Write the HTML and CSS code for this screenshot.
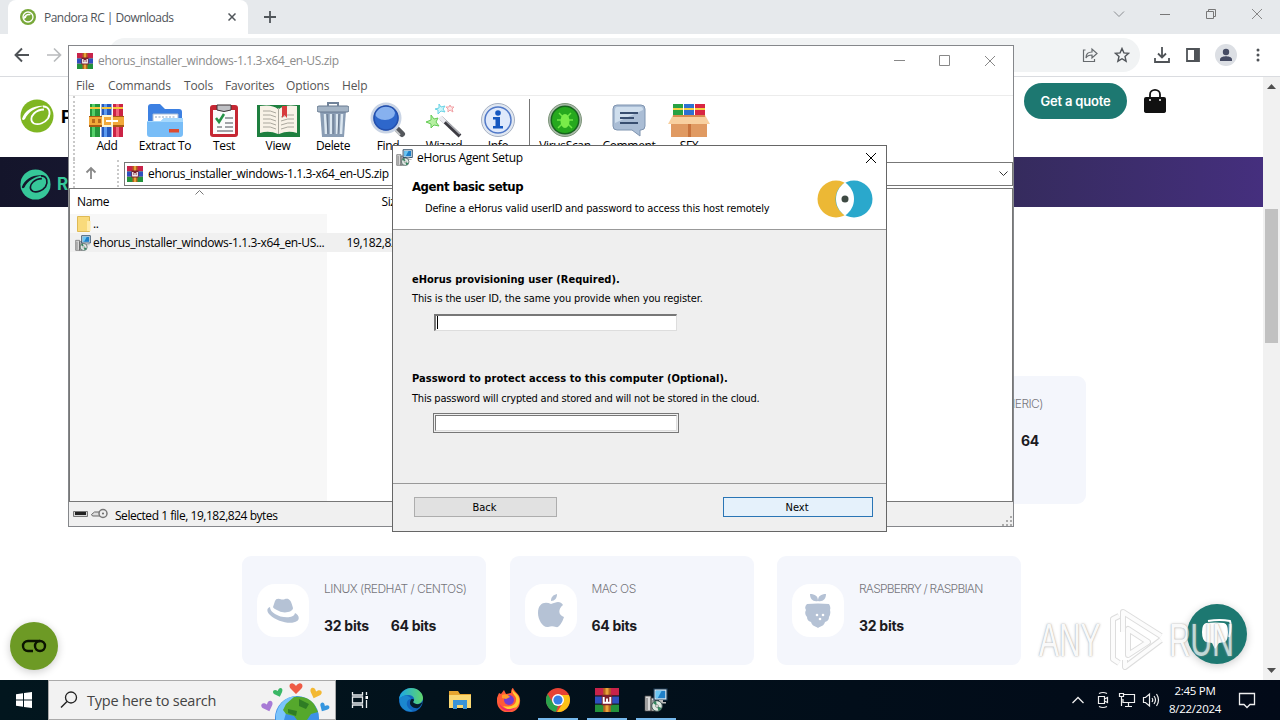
FILE: index.html
```html
<!DOCTYPE html>
<html lang="en">
<head>
    <meta charset="UTF-8">
    <meta name="viewport" content="width=device-width, initial-scale=1.0">
    <title>Pandora RC | Downloads</title>
    <link rel="stylesheet" href="styles.css">
</head>
<body>
    <!-- shared icons -->
    <svg class="defs" width="0" height="0">
        <symbol id="rar" viewBox="0 0 16 16">
            <path fill="#c8234a" d="M0 0h16v5H0z"/><path fill="#2f4fc0" d="M0 5.5h16v5H0z"/><path fill="#23923c" d="M0 11h16v5H0z"/>
            <path fill="#222" opacity=".5" d="M0 5h16v.8H0zM0 10.3h16v.8H0z"/>
            <path fill="#b5651d" d="M5.5 0h5v16h-5z"/><path fill="#e8a33a" d="M7 0h2v16H7z"/>
            <path fill="#7a1f2b" d="M4.5 4.5h7v7h-7z"/><path fill="none" stroke="#fff" stroke-width="1.3" d="M5.8 6v3.8h4.4V6M8 7v2.5"/>
        </symbol>
        <symbol id="msi" viewBox="0 0 24 24">
            <path fill="#d8d8d8" stroke="#444" stroke-width=".8" d="M1 8h6v15H1zM7 10h4v13H7z"/><path stroke="#666" d="M3 10v12M9 12v10"/>
            <path fill="#dfe8ee" stroke="#1d3c58" stroke-width="1.2" d="M10 1h13v11H10z"/><path fill="#1e7fc8" d="M11.700 2.700h9.600v7.600h-9.600z"/><path fill="#6cc6f2" d="M11.700 2.700h6l-4 7.600h-2z"/>
            <path fill="#bbb" d="M15 12h4v2h3v1.500H12V14h3z"/>
            <circle cx="13" cy="18" r="5.300" fill="#dfe9e2" stroke="#3c5052" stroke-width="1"/><path fill="#35855f" d="M13 18l-4-3a5 5 0 0 1 3-2zM13 18l4.500 2a5 5 0 0 1-3 3z"/><circle cx="13" cy="18" r="1.400" fill="#fff" stroke="#555" stroke-width=".6"/>
        </symbol>
        <symbol id="pandora" viewBox="0 0 34 34">
            <circle cx="17" cy="17" r="16.500" fill="currentColor" stroke="none"/>
            <path stroke="none" d="M2 20C5 11 14 6 25 7c-9 1-17 6-20 13q-2 2-3 0z"/>
            <path fill="none" stroke-width="1.800" d="M23 7.500c7 0 8 7 5 12-3 4-9 7-14 5-4-2-3-7 0-10 3-3 6-4 10-4"/>
        </symbol>
        <symbol id="chrome-x" viewBox="0 0 12 12"><path fill="none" stroke="currentColor" d="M1 1l10 10M11 1L1 11"/></symbol>
    </svg>

    <div class="desktop">
        <div class="browser">
            <div class="tabstrip">
                <div class="tab">
                    <svg class="favicon" width="16" height="16" viewBox="0 0 16 16"><circle cx="8" cy="8" r="8" fill="#78a83a"/><circle cx="8" cy="8" r="5" fill="none" stroke="#fff" stroke-width="1.300"/><path fill="#fff" d="M3 9c2-4 5-5 8-4L9 7l-5 3z"/><circle cx="8.500" cy="8.600" r="2.300" fill="#78a83a"/></svg>
                    <span class="tab-title">Pandora RC | Downloads</span>
                    <svg width="8" height="8" viewBox="0 0 8 8"><path stroke="#50555a" stroke-width="1.500" d="M.5.5l7 7M7.500.5l-7 7"/></svg>
                </div>
                <svg class="new-tab" width="12" height="12" viewBox="0 0 12 12"><path stroke="#50555a" stroke-width="1.800" d="M6 0v12M0 6h12"/></svg>
                <div class="window-buttons">
                    <svg width="12" height="12" viewBox="0 0 12 12"><path fill="none" stroke="#8a8d91" d="M1 3.500l5 5 5-5"/></svg>
                    <svg width="12" height="12" viewBox="0 0 12 12"><path stroke="#777" d="M1 6.500h10"/></svg>
                    <svg width="12" height="12" viewBox="0 0 12 12"><path fill="none" stroke="#777" d="M1.500 3.500h7v7h-7zM3.500 3V1.500h7v7H9"/></svg>
                    <svg class="grey" width="12" height="12"><use href="#chrome-x"/></svg>
                </div>
            </div>
            <div class="toolbar">
                <svg class="nav" width="16" height="16" viewBox="0 0 16 16"><path fill="none" stroke="#4f5357" stroke-width="1.900" d="M15 8H2M8 1.500L1.500 8 8 14.500"/></svg>
                <svg class="nav" width="16" height="16" viewBox="0 0 16 16"><path fill="none" stroke="#b9bbbd" stroke-width="1.700" d="M1 8h13M8 1.500L14.500 8 8 14.500"/></svg>
                <div class="omnibox">
                    <svg width="16" height="16" viewBox="0 0 16 16"><path fill="none" stroke="#666a6e" stroke-width="1.200" d="M3.500 3H1.500v11.500h11V12M4 11c0-4 2-6 6-6V2l5 4.500L10 11V8c-3 0-5 1-6 3z"/></svg>
                    <svg width="16" height="16" viewBox="0 0 16 16"><path fill="none" stroke="#505459" stroke-width="1.400" d="M8 1.500l1.900 4.400 4.700.4-3.600 3.200 1.100 4.700L8 11.700l-4.100 2.500L5 9.500 1.400 6.300l4.700-.4z"/></svg>
                </div>
                <div class="tools">
                    <svg width="18" height="18" viewBox="0 0 18 18"><path fill="none" stroke="#4f5357" stroke-width="1.800" d="M9 1v10M5 7.500l4 4 4-4M2 12v4h14v-4"/></svg>
                    <svg width="18" height="18" viewBox="0 0 18 18"><path fill="none" stroke="#4f5357" stroke-width="1.800" d="M3 3h12v12H3z"/><path fill="#4f5357" d="M10 3h5v12h-5z"/></svg>
                    <svg width="22" height="22" viewBox="0 0 22 22"><circle cx="11" cy="11" r="11" fill="#dcdfe4"/><circle cx="11" cy="8" r="3.200" fill="#454b63"/><path fill="#454b63" d="M5 17v-1.500C5 13 9 12.300 11 12.300s6 .7 6 3.200V17z"/></svg>
                    <svg class="dots" width="4" height="16" viewBox="0 0 4 16"><g fill="#4f5357"><circle cx="2" cy="3" r="1.500"/><circle cx="2" cy="8" r="1.500"/><circle cx="2" cy="13" r="1.500"/></g></svg>
                </div>
            </div>

            <div class="viewport">
                <div class="page">
                    <div class="site-header">
                        <svg class="logo green" width="34" height="34"><use href="#pandora"/></svg>
                        <b class="brand">Pandora</b>
                        <button class="quote-btn">Get a quote</button>
                        <svg width="22" height="25" viewBox="0 0 22 25"><path fill="none" stroke="#111" stroke-width="1.800" d="M6 11V5.500a5 4.600 0 0 1 10 0V11"/><path fill="#111" d="M2 8h18q2 0 2 2v12q0 2-3 2H3q-3 0-3-2V10q0-2 2-2z"/><circle cx="6" cy="11" r="1" fill="#fff"/><circle cx="16" cy="11" r="1" fill="#fff"/></svg>
                    </div>
                    <div class="banner">
                        <svg class="logo teal" width="31" height="31"><use href="#pandora"/></svg>
                        <b>RC</b>
                    </div>
                    <div class="cards first-row">
                        <div class="card">
                            <div>
                                <div class="os">LINUX (GENERIC)</div>
                                <div class="bits"><b>32</b><b>64</b></div>
                            </div>
                        </div>
                    </div>
                    <div class="cards">
                        <div class="card">
                            <div class="os-icon"><svg width="32" height="26" viewBox="0 0 32 26"><path fill="#b5c2d5" d="M8 3q1-3 5-2 3 1 5 0c4-1 6 1 8 9 0 4-9 6-14 3-4-2-6-3-6-4z"/><path fill="#b5c2d5" d="M3 9c-3 1-4 4 0 8 7 7 22 10 27 6 3-2 2-6-2-8-1 6-14 5-20 1-3-2-5-4-5-7z"/></svg></div>
                            <div>
                                <div class="os">LINUX (REDHAT / CENTOS)</div>
                                <div class="bits"><b>32 bits</b><b>64 bits</b></div>
                            </div>
                        </div>
                        <div class="card">
                            <div class="os-icon"><svg width="26" height="34" viewBox="0 0 26 34"><path fill="#b5c2d5" d="M13 7c0-4 2-6 6-7 0 4-2 7-6 7zM13 10c3-1 5-2 7-2 2 0 4 1 5 3-5 4-5 10 1 12-2 6-5 11-8 10-3-1-5-1-8 0C5 34 0 26 0 19 0 9 7 7 13 10z"/></svg></div>
                            <div>
                                <div class="os">MAC OS</div>
                                <div class="bits"><b>64 bits</b></div>
                            </div>
                        </div>
                        <div class="card">
                            <div class="os-icon"><svg width="26" height="34" viewBox="0 0 26 34"><path fill="#b5c2d5" d="M5 0c5 0 8 2 8 7-5 1-8-2-8-7zM21 0c-5 0-8 2-8 7 5 1 8-2 8-7zM2 10q11-1 22 0 2 3 1 6 1 4-1 7 0 4-4 5c-1 4-4 4-7 6-3-2-6-2-7-6q-4-1-4-5-3-3-1-7-2-3 1-6z"/><g fill="#fff"><circle cx="12" cy="21" r="1.300"/><circle cx="18" cy="21" r="1.300"/><circle cx="15" cy="25" r="1.300"/></g></svg></div>
                            <div>
                                <div class="os rasp">RASPBERRY / RASPBIAN</div>
                                <div class="bits"><b>32 bits</b></div>
                            </div>
                        </div>
                    </div>
                </div>
                <div class="scrollbar">
                    <svg width="9" height="5" viewBox="0 0 9 5"><path fill="#505050" d="M0 5l4.500-5L9 5z"/></svg>
                    <div class="thumb"></div>
                    <svg width="9" height="5" viewBox="0 0 9 5"><path fill="#505050" d="M0 0l4.500 5L9 0z"/></svg>
                </div>
            </div>
        </div>

        <div class="cookie-btn"><svg width="26" height="14" viewBox="0 0 26 14"><path fill="none" stroke="#0b1400" stroke-width="2.400" d="M19 2H7a5 5 0 0 0 0 10h5"/><circle cx="19" cy="7" r="5" fill="none" stroke="#0b1400" stroke-width="2.400"/></svg></div>
        <div class="chat-btn"><svg width="32" height="30" viewBox="0 0 32 30"><path fill="none" stroke="#fff" stroke-width="2" d="M7 2q12-2 22 0 2 6-1 16"/><path fill="#fff" d="M5 4q10-1 18 0 4 1 4 9 0 8-3 10l-6 1-4 6-3-6-6-1Q1 21 1 13q0-8 4-9z"/></svg></div>
        <div class="watermark">
            <span>ANY</span>
            <svg width="58" height="64" viewBox="0 0 58 64">
                <g fill="none" stroke="#d2d2d2" stroke-width="6" stroke-linejoin="round"><path d="M12 8L6 11v40l6 4M16 24V4l38 24M54 32L18 59V52M21 21v26l20-13z"/></g>
                <g fill="none" stroke="#fcfcfc" stroke-width="4" stroke-linejoin="round"><path d="M12 8L6 11v40l6 4M16 24V4l38 24M54 32L18 59V52M21 21v26l20-13z"/></g>
            </svg>
            <span>RUN</span>
        </div>

        <!-- WinRAR -->
        <div class="winrar">
            <div class="win-title">
                <svg width="16" height="16"><use href="#rar"/></svg>
                <span class="zip-name">ehorus_installer_windows-1.1.3-x64_en-US.zip</span>
                <div class="win-controls">
                    <svg width="11" height="11" viewBox="0 0 11 11"><path stroke="#888" d="M0 5.500h11"/></svg>
                    <svg width="11" height="11" viewBox="0 0 11 11"><path fill="none" stroke="#888" d="M.5.5h10v10H.5z"/></svg>
                    <svg class="grey" width="12" height="12"><use href="#chrome-x"/></svg>
                </div>
            </div>
            <div class="menu"><span class="m1">File</span><span class="m2">Commands</span><span class="m3">Tools</span><span class="m4">Favorites</span><span class="m5">Options</span><span>Help</span></div>
            <div class="rar-tools">
                <div class="rt w50">
                    <svg width="36" height="34" viewBox="0 0 36 34"><path fill="#24963c" d="M1 1h10v33H1z"/><path fill="#54d069" d="M3 1h3v33H3z"/><path fill="#2559bd" d="M12.500 1h10v33h-10z"/><path fill="#5b9af0" d="M15 1h3v33h-3z"/><path fill="#cb2345" d="M24 1h10v33H24z"/><path fill="#f0647c" d="M27 1h3v33h-3z"/><path fill="#f5c63b" d="M1 4h10v2H1zM12.500 4h10v2h-10zM24 4h10v2H24z"/><path fill="#a85a14" d="M0 13h35v11H0z"/><path fill="#f1a93a" d="M0 14h35v8H0z"/><path fill="#b9691a" d="M3 16h3v4H3zM9 16h3v4H9z"/><path fill="none" stroke="#fff5cf" stroke-width="2" d="M14 13h9v10h-9z"/><path stroke="#fff" stroke-width="2" d="M17 18h12"/></svg>
                    <span>Add</span>
                </div>
                <div class="rt w66">
                    <svg width="38" height="34" viewBox="0 0 38 34"><path fill="#3c80e2" d="M2 4q0-3 3-3h9l5 5h14q3 0 3 3v20H2z"/><path fill="#fff" stroke="#a7bcd6" d="M7 11h25v12H7z"/><path stroke="#8ca2be" stroke-dasharray="2 1.500" d="M9 14h21"/><path fill="#78bdf7" d="M1 18h14l3-3h19v16q0 3-3 3H4q-3 0-3-3z"/><path fill="#a5d8fd" d="M1 18h14l3-3h19v4H1z"/><path fill="#dc4a30" d="M23 26h10v3.500H23z"/></svg>
                    <span>Extract To</span>
                </div>
                <div class="rt w52">
                    <svg width="30" height="34" viewBox="0 0 30 34"><rect x="1" y="2" width="28" height="32" rx="3" fill="#c52733"/><path fill="#fbfbfb" d="M4 7h22v24H4z"/><path fill="#bfc0c4" stroke="#3e3436" d="M8 2h14v5q-7 3-14 0z"/><path stroke="#85888d" stroke-width="1.500" d="M16 15h8M16 20h8M8 24h5M16 24h8M8 28h16"/><path fill="none" stroke="#259246" stroke-width="2.500" d="M7 15l3 4 5-8"/></svg>
                    <span>Test</span>
                </div>
                <div class="rt w56">
                    <svg width="43" height="34" viewBox="0 0 43 34"><path fill="#1e7f3f" d="M0 2h43v32H0z"/><path fill="#f8f2e7" d="M3 3q12-2 18 3v25q-9-4-18-1zM40 3q-12-2-18 3v25q9-4 18-1z"/><path fill="none" stroke="#aaa79d" d="M6 8q8-1 13 2M6 12q8-1 13 2M6 16q8-1 13 2M6 20q8-1 13 2M6 24q8-1 13 2M24 14q7-3 13-2M24 18q7-3 13-2M24 22q7-3 13-2M24 26q7-3 13-2M21.500 5v26"/><path fill="#d73b3c" d="M25 3h5v12l-2.500-3L25 15z"/></svg>
                    <span>View</span>
                </div>
                <div class="rt w54">
                    <svg width="32" height="36" viewBox="0 0 32 36"><path fill="#8a9db4" d="M3 9h26l-2 26H5z"/><path stroke="#dce7f0" stroke-width="2.500" d="M8 12l1 20M14 12v20M20 12v20M25 12l-1 20"/><path stroke="#64748a" d="M10 12l1 20M16 12v20M22 12l-1 20"/><rect x="0" y="4" width="32" height="6" rx="2" fill="#a4b4c5" stroke="#687b91"/><path fill="none" stroke="#71839a" stroke-width="2" d="M11 4V1h10v3"/></svg>
                    <span>Delete</span>
                </div>
                <div class="rt w56">
                    <svg width="37" height="36" viewBox="0 0 37 36"><path stroke="#54575c" stroke-width="6" stroke-linecap="round" d="M25 25l7 7"/><path stroke="#c6c8ca" stroke-width="2" d="M24 27l6 6"/><circle cx="16" cy="16" r="14" fill="#2e67cb" stroke="#c9d4e5" stroke-width="3"/><ellipse cx="15" cy="11" rx="10" ry="7" fill="#87b1ef"/><circle cx="16" cy="16" r="12" fill="none" stroke="#2450ad" stroke-width="1.500"/></svg>
                    <span>Find</span>
                </div>
                <div class="rt w56">
                    <svg width="36" height="34" viewBox="0 0 36 34"><path stroke="#3c3b42" stroke-width="4" d="M15 15l19 18"/><path stroke="#aeb0b6" stroke-width="1.500" d="M16 14l18 17"/><path stroke="#ececf1" stroke-width="4" d="M14 14l5 5"/><path fill="#b6f0a2" stroke="#65ca55" d="M5 12l3 4 4-1-2 4 3 4-5-1-3 3v-4l-5-2 5-2z"/><path fill="#cdf6fa" stroke="#6bd3e5" d="M13 1l2 3 4-1-2 3 2 3-4-1-3 3v-4L9 6l4-1z"/><path fill="#ffe9e9" stroke="#f1a2a6" d="M24 2l1 2 3 0-2 2 1 3-3-2-2 2 0-3-2-2 3 0z"/></svg>
                    <span>Wizard</span>
                </div>
                <div class="rt w52">
                    <svg width="36" height="34" viewBox="0 0 36 34"><circle cx="18" cy="17" r="16.500" fill="#e1e8f2" stroke="#a7b1c2"/><circle cx="18" cy="17" r="13" fill="#dfe9fb" stroke="#5179c8" stroke-width="1.500"/><circle cx="18" cy="10" r="2.800" fill="#1557c0"/><path fill="#1557c0" d="M13 14h7v9h3v2.500H13V23h2.500v-6.500H13z"/></svg>
                    <span>Info</span>
                </div>
                <div class="rt-sep"></div>
                <div class="rt w62">
                    <svg width="36" height="34" viewBox="0 0 36 34"><circle cx="18" cy="17" r="16.500" fill="#aab9aa" stroke="#7e977b"/><circle cx="18" cy="17" r="14.500" fill="#17631e"/><circle cx="18" cy="17" r="13" fill="#26a91e"/><path fill="none" stroke="#71e748" stroke-width="1.500" d="M12 10l4 4M24 10l-4 4M10 17h16M11 25l5-5M25 25l-5-5"/><ellipse cx="18" cy="18" rx="4.500" ry="7" fill="#79ec49"/></svg>
                    <span>VirusScan</span>
                </div>
                <div class="rt w66">
                    <svg width="34" height="34" viewBox="0 0 34 34"><path fill="#aabdd5" stroke="#7f94b0" d="M5 2h24q4 0 4 4v17q0 4-4 4h-1v6l-8-6H5q-4 0-4-4V6q0-4 4-4z"/><path fill="#cfdeed" d="M5 4h24q2 0 2 3l-28 13V7q0-3 2-3z"/><path stroke="#384e70" stroke-width="2" d="M8 10h18M8 15h14M8 20h18"/></svg>
                    <span>Comment</span>
                </div>
                <div class="rt w54">
                    <svg width="42" height="34" viewBox="0 0 42 34"><path fill="#28a243" d="M5 1h10v17H5z"/><path fill="#2d71d2" d="M16 1h10v17H16z"/><path fill="#d82643" d="M27 1h10v17H27z"/><path fill="#f5d145" d="M5 5h10v2H5zM16 5h10v2H16zM27 5h10v2H27z"/><path fill="#e09a62" d="M3 20h36v14H3z"/><path fill="#f8d0a0" d="M5 12h32l5 9H0z"/><path fill="#d98b50" d="M5 12h32v2H5z"/><path fill="#c8733d" d="M20 21h3v13h-3z"/></svg>
                    <span>SFX</span>
                </div>
            </div>
            <div class="address">
                <svg class="up" width="12" height="13" viewBox="0 0 12 13"><path fill="none" stroke="#888" stroke-width="1.800" d="M6 13V2M1.500 6.500L6 2l4.500 4.500"/></svg>
                <div class="grab"></div>
                <div class="path-box">
                    <svg width="16" height="16"><use href="#rar"/></svg>
                    <span class="zip-name">ehorus_installer_windows-1.1.3-x64_en-US.zip</span>
                    <svg class="drop" width="9" height="6" viewBox="0 0 9 6"><path fill="none" stroke="#333" d="M.5.5l4 4 4-4"/></svg>
                </div>
            </div>
            <div class="file-list">
                <div class="list-head"><span>Name</span><svg width="9" height="5" viewBox="0 0 9 5"><path fill="none" stroke="#777" d="M.5 4.500l4-4 4 4"/></svg><span class="size">Size</span></div>
                <div class="file-row">
                    <svg width="14" height="16" viewBox="0 0 14 16"><path fill="#f9da7b" stroke="#dfba55" d="M.5.5h12v15H.5z"/><path fill="#ffebaa" d="M10 5h3.500v10H10z"/></svg>
                    <span>..</span>
                </div>
                <div class="file-row selected">
                    <svg width="16" height="16"><use href="#msi"/></svg>
                    <span>ehorus_installer_windows-1.1.3-x64_en-US...</span>
                    <span class="size">19,182,824</span>
                </div>
                <div class="column-fill"></div>
            </div>
            <div class="status">
                <svg width="36" height="12" viewBox="0 0 36 12"><path fill="#d7d7d7" stroke="#777" d="M.5 3.500h14v5H.5z"/><path fill="#222" d="M2 4h11v3H2z"/><path fill="#ddd" stroke="#666" d="M18.500 6.500l3-2.500h6l1 4h-9z"/><circle cx="30" cy="5.500" r="4" fill="#eee" stroke="#777" stroke-width="1.500"/><circle cx="30" cy="5.500" r="1" fill="#666"/></svg>
                <span>Selected 1 file, 19,182,824 bytes</span>
                <svg class="grip" width="10" height="10" viewBox="0 0 10 10"><path fill="#aaa" d="M8 0h2v2H8zM8 4h2v2H8zM8 8h2v2H8zM4 4h2v2H4zM4 8h2v2H4zM0 8h2v2H0z"/></svg>
            </div>
        </div>

        <!-- installer dialog -->
        <div class="dialog">
            <div class="dlg-title">
                <svg width="17" height="17"><use href="#msi"/></svg>
                <span>eHorus Agent Setup</span>
                <svg class="close" width="12" height="12"><use href="#chrome-x"/></svg>
            </div>
            <div class="dlg-head">
                <div>
                    <h1>Agent basic setup</h1>
                    <p>Define a eHorus valid userID and password to access this host remotely</p>
                </div>
                <svg width="56" height="38" viewBox="0 0 56 38"><circle cx="19" cy="19" r="18.500" fill="#ecb835"/><circle cx="37" cy="19" r="18.500" fill="#2aa8cc"/><path fill="#fff" d="M28 2.500c12 8 12 25 0 33-12-8-12-25 0-33z"/><circle cx="28" cy="19" r="3.500" fill="#3e4a43"/></svg>
            </div>
            <div class="dlg-body">
                <h2>eHorus provisioning user (Required).</h2>
                <p>This is the user ID, the same you provide when you register.</p>
                <div class="field"><i class="caret"></i></div>
                <h2 class="second">Password to protect access to this computer (Optional).</h2>
                <p class="p2">This password will crypted and stored and will not be stored in the cloud.</p>
                <div class="field framed"></div>
            </div>
            <div class="dlg-foot">
                <button class="back">Back</button>
                <button class="next">Next</button>
            </div>
        </div>

        <div class="taskbar">
            <div class="start"><svg width="16" height="16" viewBox="0 0 16 16"><path fill="#fff" d="M0 2.300l7-1v6.200H0zM8 1.100L16 0v7.500H8zM0 8.500h7v6.200l-7-1zM8 8.500h8V16l-8-1.100z"/></svg></div>
            <div class="search">
                <svg width="18" height="18" viewBox="0 0 18 18"><circle cx="11" cy="6.500" r="5.500" fill="none" stroke="#222" stroke-width="1.300"/><path stroke="#222" stroke-width="1.500" d="M7 10.500L1 16.500"/></svg>
                <span>Type here to search</span>
                <svg class="earth" width="70" height="38" viewBox="0 0 70 38">
                    <defs><path id="heart" d="M0 3C-4-3-9 2-5 6L0 11 5 6C9 2 4-3 0 3z"/></defs>
                    <circle cx="36" cy="36" r="22" fill="#3d91e6"/><path fill="#7ac4fb" d="M15 32q5-17 20-18l-8 10-4 14h-8z"/>
                    <path fill="#55a82c" d="M25 22l8-7q13-2 20 7l4 8-7 2-4 6H36l-3-4-8-2-3-4z"/><path fill="#2f7d24" d="M38 17l10 5-3 5-7-3zM27 27l9 2-1 5-8-3z"/>
                    <use href="#heart" fill="#ee5a45" transform="translate(35 1)"/><use href="#heart" fill="#3ab765" transform="translate(16 7) rotate(-20) scale(.75)"/><use href="#heart" fill="#f3b832" transform="translate(56 7) rotate(20) scale(.9)"/><use href="#heart" fill="#a77ad5" transform="translate(5 20) rotate(-20) scale(.9)"/><use href="#heart" fill="#3596df" transform="translate(65 22) rotate(30) scale(.75)"/>
                </svg>
            </div>
            <div class="apps">
                <div class="app"><svg width="18" height="18" viewBox="0 0 18 18"><path fill="none" stroke="#e8ecee" stroke-width="1.300" d="M1.500 1v3h10V1M1.500 17v-3h10v3M1.500 6h10v6h-10zM15.500 1v3M15.500 9v8"/><path fill="#fff" d="M14.500 5h2.500v3h-2.500z"/></svg></div>
                <div class="app"><svg width="24" height="24" viewBox="0 0 24 24"><defs><linearGradient id="edge" x2="1"><stop stop-color="#1aa7e8"/><stop offset="1" stop-color="#60d66b"/></linearGradient></defs><circle cx="12" cy="12" r="12" fill="#1265bd"/><path fill="url(#edge)" d="M0 11C1 4 7 0 12 0c7 0 12 5 12 10 0 6-8 8-10 4 3-3 0-7-4-7-5 0-8 2-10 4z"/><path fill="#061c2b" d="M14 14c2 3 8 3 10-1-1 3-3 6-5 7-4 1-8-2-8-5 0-2 1-4 2-4 3 0 2 2 1 3z"/><path fill="#1b87cf" d="M1 10c4-4 9-3 11 1-5 0-7 8 2 12C6 25-1 18 1 10z"/></svg></div>
                <div class="app"><svg width="22" height="20" viewBox="0 0 22 20"><path fill="#e6a52f" d="M0 1h9l2 3h11v14H0z"/><path fill="#fad873" d="M0 5h22v13H0z"/><path fill="#3a94d8" d="M4 10h14v9h-4v-4H8v4H4z"/></svg></div>
                <div class="app"><svg width="24" height="24" viewBox="0 0 24 24"><path fill="#ff5a37" d="M2 5l2 1 3-4 2 4 5-1c0-3 1-5 2-5 2 5 8 6 7 14-1 14-22 14-23 0-1-4 1-6 2-9z"/><path fill="#ffcc32" d="M15 1c2 5 9 5 7 14-2 7-11 9-16 3 9 2 14-2 13-8-1-3-4-4-4-9z"/><path fill="#ef256b" d="M2 15c2 9 12 10 17 4C12 23 5 21 2 15z"/><circle cx="12" cy="12" r="5" fill="#753bd1"/><path fill="#ff9b28" d="M5 7q5-2 8 2l-4 2-4-1z"/></svg></div>
                <div class="app open"><svg width="24" height="24" viewBox="0 0 24 24"><circle cx="12" cy="12" r="12" fill="#e64235"/><path fill="#2ba24c" d="M1.600 6L7 15q2 3 5 3l-2 6A12 12 0 0 1 1.600 6z"/><path fill="#fbc116" d="M12 7h10.900A12 12 0 0 1 11 24l6-9z"/><circle cx="12" cy="12" r="6" fill="#fff"/><circle cx="12" cy="12" r="4.600" fill="#377ee5"/></svg></div>
                <div class="app open"><svg width="24" height="24"><use href="#rar"/></svg></div>
                <div class="app open"><svg width="24" height="24"><use href="#msi"/></svg></div>
            </div>
            <div class="tray">
                <svg width="14" height="16" viewBox="0 0 14 16"><path fill="none" stroke="#eee" stroke-width="1.300" d="M1.500 11L7 5.500l5.500 5.500"/></svg>
                <svg width="14" height="18" viewBox="0 0 14 18"><path fill="none" stroke="#eee" stroke-width="1.200" d="M2.500 5.500h6v7h-6zM8.500 8l3-1.500v5L8.500 10M3 2.500q4-2 8 0M3 15.500q4 2 8 0"/></svg>
                <svg width="18" height="16" viewBox="0 0 18 16"><path fill="none" stroke="#eee" stroke-width="1.200" d="M6 2.500h10.500v8H5V7M10.500 10.500V14M7 14.500h7M1.500 1.500h4v3h-4zM3.500 5v9"/></svg>
                <svg width="18" height="16" viewBox="0 0 18 16"><path fill="none" stroke="#eee" stroke-width="1.200" d="M1.500 5.500h2L7.500 2v12l-4-3.500h-2zM10 6q1.500 2 0 4M12 4q3 4 0 8M14.500 2q4 6 0 12"/></svg>
                <div class="clock"><span>2:45 PM</span><span>8/22/2024</span></div>
                <svg width="18" height="18" viewBox="0 0 18 18"><path fill="none" stroke="#eee" stroke-width="1.300" d="M1.500 2.500h15v11H12L9 16.500l-3-3H1.500z"/></svg>
            </div>
        </div>
    </div>
</body>
</html>
```

FILE: styles.css
```css
* {
    box-sizing: border-box;
}
body {
    margin: 0;
    font-family: "Open Sans", "Noto Sans", sans-serif;
    font-size: 12px;
}
svg {
    display: block;
    flex: none;
}
h1, h2, p {
    margin: 0;
}
button {
    font: inherit;
    padding: 0;
}
.defs {
    position: absolute;
}
.desktop {
    position: relative;
    width: 1280px;
    height: 720px;
    overflow: hidden;
    display: flex;
    flex-direction: column;
    white-space: nowrap;
}

/* browser */
.browser {
    height: 680px;
    display: flex;
    flex-direction: column;
    background: #fff;
}
.tabstrip {
    height: 34px;
    background: #e6e9ec;
    display: flex;
    align-items: center;
    padding-left: 8px;
}
.tab {
    width: 240px;
    height: 34px;
    background: #fff;
    border-radius: 8px 8px 0 0;
    display: flex;
    align-items: center;
    padding: 0 12px;
    color: #50545a;
}
.tab-title {
    flex: 1;
    margin-left: 8px;
    letter-spacing: -0.52px;
}
.new-tab {
    margin-left: 16px;
}
.window-buttons {
    margin-left: auto;
    display: flex;
    gap: 34px;
    padding: 0 17px 6px 0;
}
.grey {
    color: #888;
}
.toolbar {
    height: 43px;
    border-bottom: 1px solid #dadce0;
    display: flex;
    align-items: center;
    padding-left: 14px;
}
.nav {
    margin-right: 16px;
}
.omnibox {
    width: 1032px;
    height: 34px;
    margin-left: 30px;
    border-radius: 17px;
    background: #f1f3f4;
    display: flex;
    align-items: center;
    justify-content: flex-end;
    gap: 16px;
    padding-right: 10px;
}
.tools {
    display: flex;
    align-items: center;
    gap: 13px;
    margin-left: 13px;
}
.dots {
    margin-left: 6px;
}
.viewport {
    flex: 1;
    display: flex;
}
.page {
    width: 1263px;
    font-family: Inter, sans-serif;
}
.scrollbar {
    width: 17px;
    background: #f1f1f1;
    display: flex;
    flex-direction: column;
    align-items: center;
    justify-content: space-between;
    padding: 7px 0;
}
.thumb {
    width: 13px;
    height: 134px;
    margin-bottom: 206px;
    background: #c1c1c1;
}

/* downloads page */
.site-header {
    height: 80px;
    display: flex;
    align-items: center;
    padding: 0 0 2px 20px;
}
.green {
    color: #7fb622;
    fill: #fff;
    stroke: #fff;
}
.teal {
    color: #36c799;
    fill: #14152b;
    stroke: #14152b;
}
.brand {
    width: 963px;
    margin-left: 7px;
    font-size: 18px;
}
.quote-btn {
    width: 103px;
    height: 36px;
    margin: -30px 17px 0 0;
    border: none;
    border-radius: 18px;
    background: #1d7871;
    color: #fff;
    font-size: 13px;
    font-weight: 600;
    letter-spacing: -0.2px;
}
.site-header svg:last-child {
    margin-top: -30px;
}
.banner {
    height: 50px;
    display: flex;
    align-items: center;
    gap: 6px;
    padding: 4px 20px 0 20px;
    background: linear-gradient(90deg, #14152b 0%, #352b5d 80%, #452f7e 100%);
    color: #36c799;
    font-size: 17px;
}
.cards {
    display: flex;
    gap: 23.500px;
    margin-left: 242px;
}
.first-row {
    margin: 169px 0 52px 842px;
}
.first-row .card {
    height: 128px;
    padding: 0 43px 30px;
    justify-content: flex-end;
}
.first-row .bits {
    justify-content: flex-end;
    padding-right: 4px;
}
.card {
    width: 244px;
    height: 109px;
    border-radius: 9px;
    background: #f4f6fc;
    display: flex;
    align-items: center;
    gap: 15px;
    padding-left: 15px;
}
.os-icon {
    width: 52px;
    height: 53px;
    border-radius: 18px;
    background: #fff;
    display: flex;
    align-items: center;
    justify-content: center;
}
.os {
    color: #77777d;
    font-size: 12px;
    line-height: 16px;
    letter-spacing: -0.52px;
    font-weight: 300;
}
.rasp {
    letter-spacing: -0.75px;
}
.bits {
    display: flex;
    gap: 22px;
    margin: 20px 0 5px;
    color: #1b1b1f;
    font-size: 14px;
    line-height: 18px;
    letter-spacing: -0.28px;
}
.cookie-btn, .chat-btn {
    position: absolute;
    display: flex;
    align-items: center;
    justify-content: center;
    border-radius: 50%;
    box-shadow: 0 2px 8px rgba(0, 0, 0, .2);
}
.cookie-btn {
    left: 10px;
    top: 622px;
    width: 48px;
    height: 48px;
    background: #6d9a25;
}
.chat-btn {
    left: 1187px;
    top: 604px;
    width: 60px;
    height: 60px;
    background: #1d7871;
}
.watermark {
    position: absolute;
    left: 1039px;
    top: 608px;
    height: 64px;
    display: flex;
    align-items: center;
    gap: 4px;
    opacity: .75;
    color: #f8f8f8;
    font: 46px/64px "Liberation Sans", sans-serif;
    text-shadow: 0 0 3px #999, 0 0 1px #999;
}
.watermark span {
    width: 64px;
    transform: scaleX(.65);
    transform-origin: 0 50%;
}

/* WinRAR */
.winrar {
    position: absolute;
    left: 68px;
    top: 45px;
    width: 946px;
    height: 482px;
    border: 1px solid #85878b;
    background: #fff;
    display: flex;
    flex-direction: column;
    letter-spacing: -0.35px;
}
.win-title {
    height: 29px;
    display: flex;
    align-items: center;
    gap: 5px;
    padding: 0 17px 0 8px;
    color: #8c8c8c;
}
.win-controls {
    display: flex;
    gap: 34px;
    margin-left: auto;
}
.menu {
    height: 21px;
    padding: 1px 0 0 7px;
    display: flex;
    align-items: center;
    border-bottom: 1px solid #ececec;
    color: #555;
    letter-spacing: -0.15px;
}
.m1 { width: 32px; }
.m2 { width: 76px; }
.m3 { width: 41px; }
.m4 { width: 61px; }
.m5 { width: 56px; }
.rar-tools {
    height: 63px;
    margin-left: 4px;
    padding: 6px 0 0 7px;
    border-left: 2px dotted #c9c9c9;
    display: flex;
}
.rt {
    display: flex;
    flex-direction: column;
    align-items: center;
}
.rt svg {
    height: 36px;
}
.rt span {
    line-height: 16px;
}
.w50 { width: 50px; }
.w52 { width: 52px; }
.w54 { width: 54px; }
.w56 { width: 56px; }
.w62 { width: 62px; }
.w66 { width: 66px; }
.rt-sep {
    width: 1px;
    margin: -3px 4px 0 5px;
    background: #777;
}
.address {
    height: 29px;
    margin-left: 4px;
    border-left: 2px dotted #c9c9c9;
    display: flex;
    align-items: center;
}
.up {
    margin: 0 20px 3px 10px;
}
.grab {
    height: 27px;
    margin-right: 5px;
    border-left: 2px dotted #c9c9c9;
}
.path-box {
    flex: 1;
    height: 24px;
    border: 1px solid #777;
    display: flex;
    align-items: center;
    gap: 5px;
    padding-left: 2px;
}
.drop {
    margin: 0 4px 0 auto;
}
.file-list {
    height: 314px;
    border: 1px solid #777;
    display: flex;
    flex-direction: column;
}
.list-head {
    height: 25px;
    width: 328px;
    display: flex;
    padding: 4px 0 0 7px;
}
.list-head svg {
    margin: -3px auto 0 86px;
}
.list-head .size {
    margin-right: -4px;
}
.file-row {
    height: 19px;
    width: 257px;
    background: #f7f7f7;
    display: flex;
    align-items: center;
    gap: 2px;
    padding-left: 7px;
}
.selected {
    width: 334px;
    padding-left: 5px;
    background: #f0f0f0;
}
.selected .size {
    margin-left: auto;
}
.column-fill {
    flex: 1;
    width: 257px;
    background: #f7f7f7;
}
.status {
    flex: 1;
    background: #f0f0f0;
    display: flex;
    align-items: center;
    gap: 6px;
    padding: 3px 1px 0 4px;
    letter-spacing: -0.46px;
}
.status svg:first-child {
    margin-top: -3px;
}
.grip {
    margin: 10px 0 0 auto;
}

/* dialog */
.dialog {
    position: absolute;
    left: 392px;
    top: 145px;
    width: 495px;
    height: 387px;
    border: 1px solid #666;
    background: #efefef;
    display: flex;
    flex-direction: column;
    color: #000;
    font-family: "DejaVu Sans Condensed", "DejaVu Sans", sans-serif;
    font-size: 11px;
}
.dlg-title {
    height: 24px;
    background: #fff;
    display: flex;
    align-items: center;
    gap: 4px;
    padding: 0 9px 1px 3px;
    font-family: "Open Sans", sans-serif;
    font-size: 12px;
    letter-spacing: -0.34px;
}
.close {
    margin-left: auto;
}
.dlg-head {
    height: 60px;
    background: #fff;
    border-bottom: 1px solid #999;
    display: flex;
    justify-content: space-between;
    padding: 10px 13px 0 19px;
}
.dlg-head h1 {
    font-size: 13px;
    line-height: 14px;
    letter-spacing: -0.45px;
}
.dlg-head p {
    margin: 7px 0 0 13px;
    line-height: 15px;
    letter-spacing: -0.17px;
}
.dlg-body {
    height: 254px;
    padding: 43px 19px 0;
    border-bottom: 1px solid #999;
}
.dlg-body h2 {
    font-size: 11px;
    line-height: 14px;
    letter-spacing: 0.02px;
}
.dlg-body p {
    margin-top: 5px;
    line-height: 14px;
    letter-spacing: -0.12px;
}
.dlg-body .second {
    margin-top: 41px;
    letter-spacing: 0.05px;
}
.dlg-body .p2 {
    margin-top: 6px;
    letter-spacing: -0.2px;
}
.field {
    width: 243px;
    height: 17px;
    margin: 8px 0 0 22px;
    background: #fff;
    border: 1px solid #ddd;
    border-top: 2px solid #777;
    border-left: 2px solid #777;
}
.framed {
    width: 242px;
    height: 16px;
    margin: 9px 0 0 23px;
    border-width: 1px;
    outline: 1px solid #777;
    outline-offset: 1px;
}
.caret {
    display: block;
    width: 1px;
    height: 13px;
    margin-left: 1px;
    background: #000;
}
.dlg-foot {
    flex: 1;
    display: flex;
    justify-content: space-between;
    padding: 13px 13px 0 21px;
}
.dlg-foot button {
    height: 20px;
    padding-right: 2px;
    border: 1px solid #adadad;
    background: #e1e1e1;
}
.dlg-foot .back {
    width: 143px;
}
.dlg-foot .next {
    width: 150px;
    border-color: #2a75b5;
    background: #e5f1fb;
}

/* taskbar */
.taskbar {
    height: 40px;
    display: flex;
    background: linear-gradient(90deg, #02161e, #020a18);
    color: #fff;
}
.start {
    width: 48px;
    display: flex;
    align-items: center;
    justify-content: center;
}
.search {
    width: 288px;
    display: flex;
    align-items: center;
    border: 1px solid #aaa;
    background: #f2f2f2;
    padding-left: 11px;
    color: #444;
    font-size: 14.500px;
    letter-spacing: -0.22px;
}
.search span {
    margin-left: 9px;
}
.earth {
    margin: 2px 4px 0 auto;
}
.apps {
    display: flex;
    gap: 9px;
    padding-left: 6px;
}
.app {
    width: 40px;
    display: flex;
    align-items: center;
    justify-content: center;
}
.app:first-child {
    padding-right: 4px;
}
.open {
    border-bottom: 2px solid #76b9ed;
    padding-top: 2px;
}
.tray {
    margin-left: auto;
    display: flex;
    align-items: center;
    gap: 8px;
    padding-right: 24px;
}
.tray svg:nth-child(2) {
    margin-left: 3px;
}
.tray svg:nth-child(3) {
    margin-right: -2px;
}
.clock {
    width: 56px;
    margin: 0 7px 0 -1px;
    display: flex;
    flex-direction: column;
    text-align: center;
    font-size: 11.500px;
    line-height: 18px;
    letter-spacing: -0.25px;
}
```
